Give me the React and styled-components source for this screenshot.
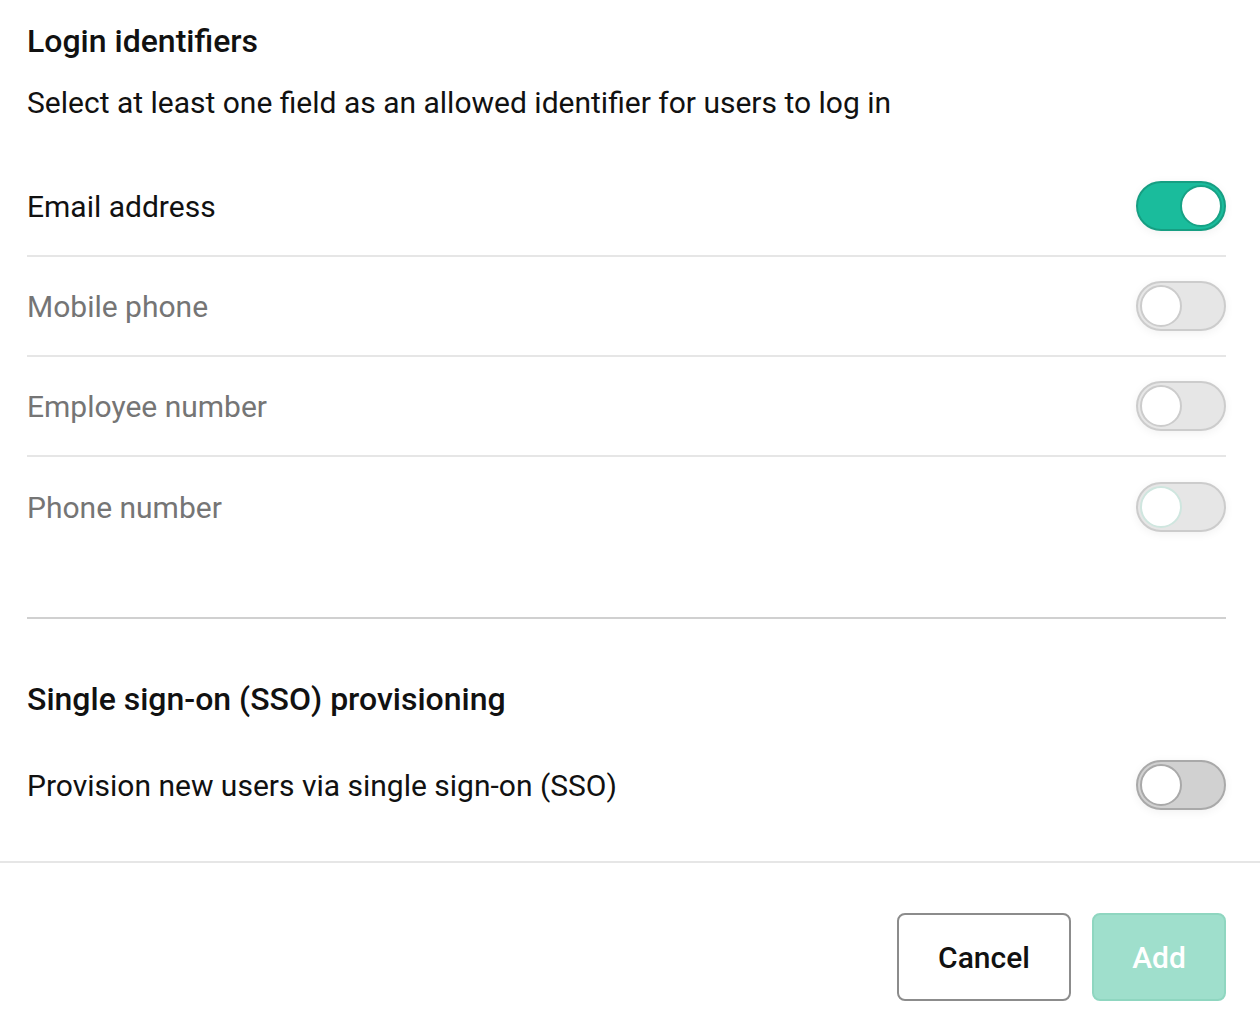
import React, { useState } from "react";
import styled, { createGlobalStyle } from "styled-components";

const GlobalStyle = createGlobalStyle`
  html, body {
    margin: 0;
    padding: 0;
    background: #ffffff;
    font-family: Roboto, "Noto Sans", Arial, sans-serif;
    color: #111111;
  }
  * { box-sizing: border-box; }
`;

const Dialog = styled.div`
  width: 1260px;
  height: 1026px;
  display: flex;
  flex-direction: column;
  background: #fff;
  overflow: hidden;
`;

const Body = styled.div`
  padding: 0 34px 0 27px;
`;

const Section = styled.section`
  display: flex;
  flex-direction: column;
  border-bottom: ${({ $divider }) => ($divider ? "2px solid #d0d0d0" : "none")};
  padding-bottom: ${({ $pad }) => $pad || 0}px;
`;

const Title = styled.h2`
  margin: 0;
  font-size: 32px;
  font-weight: 500;
  line-height: 36px;
  color: #111;
  padding-top: ${({ $top }) => $top}px;
`;

const Description = styled.p`
  margin: 27px 0 0;
  font-size: 30px;
  line-height: 34px;
  color: #111;
`;

const List = styled.div`
  display: flex;
  flex-direction: column;
  margin-top: ${({ $top }) => $top}px;
`;

const Row = styled.div`
  height: ${({ $h }) => $h || 100}px;
  display: flex;
  align-items: center;
  justify-content: space-between;
  border-bottom: ${({ $last }) => ($last ? "none" : "2px solid #e6e6e6")};
`;

const Label = styled.span`
  font-size: 30px;
  color: ${({ $muted }) => ($muted ? "#757575" : "#111")};
`;

const Track = styled.button`
  position: relative;
  width: 90px;
  height: 50px;
  border-radius: 25px;
  padding: 0;
  cursor: pointer;
  border: 2px solid
    ${({ $on, $dark }) => ($on ? "#169e82" : $dark ? "#a9a9a9" : "#cccccc")};
  background: ${({ $on, $dark }) => ($on ? "#1abc9c" : $dark ? "#d1d1d1" : "#e6e6e6")};
  box-shadow: 0 2px 10px rgba(0, 0, 0, 0.06);
`;

const Knob = styled.span`
  position: absolute;
  top: 2px;
  left: ${({ $on }) => ($on ? "42px" : "2px")};
  width: 42px;
  height: 42px;
  border-radius: 50%;
  background: #fff;
  border: 2px solid
    ${({ $on, $focus, $dark }) =>
      $on ? "#17a285" : $focus ? "#cfe6df" : $dark ? "#a9a9a9" : "#cccccc"};
`;

const Footer = styled.div`
  margin-top: auto;
  border-top: 2px solid #e6e6e6;
  padding: 50px 34px 25px 0;
  display: flex;
  justify-content: flex-end;
  gap: 21px;
`;

const Button = styled.button`
  height: 88px;
  min-width: ${({ $w }) => $w}px;
  border-radius: 8px;
  font-family: Roboto, "Noto Sans", Arial, sans-serif;
  font-size: 30px;
  font-weight: 500;
  cursor: pointer;
  border: 2px solid ${({ $primary }) => ($primary ? "#8fd6c0" : "#8c8c8c")};
  background: ${({ $primary }) => ($primary ? "#9fdfcc" : "#fff")};
  color: ${({ $primary }) => ($primary ? "#fff" : "#111")};
`;

const Toggle = ({ on, dark, focus, onClick }) => (
  <Track $on={on} $dark={dark} onClick={onClick} aria-pressed={on}>
    <Knob $on={on} $dark={dark} $focus={focus} />
  </Track>
);

const identifiers = [
  { id: "email", label: "Email address" },
  { id: "mobile", label: "Mobile phone" },
  { id: "employee", label: "Employee number" },
  { id: "phone", label: "Phone number" },
];

export default function App() {
  const [enabled, setEnabled] = useState({ email: true });
  const [sso, setSso] = useState(false);

  const flip = (id) => setEnabled((s) => ({ ...s, [id]: !s[id] }));

  return (
    <>
      <GlobalStyle />
      <Dialog>
        <Body>
          <Section $divider $pad={60}>
            <Title $top={23}>Login identifiers</Title>
            <Description>
              Select at least one field as an allowed identifier for users to log in
            </Description>
            <List $top={37}>
              {identifiers.map((item, i) => (
                <Row key={item.id} $last={i === identifiers.length - 1}>
                  <Label $muted={!enabled[item.id]}>{item.label}</Label>
                  <Toggle
                    on={!!enabled[item.id]}
                    focus={item.id === "phone"}
                    onClick={() => flip(item.id)}
                  />
                </Row>
              ))}
            </List>
          </Section>
          <Section>
            <Title $top={62}>Single sign-on (SSO) provisioning</Title>
            <List $top={18}>
              <Row $last $h={100}>
                <Label>Provision new users via single sign-on (SSO)</Label>
                <Toggle on={sso} dark onClick={() => setSso(!sso)} />
              </Row>
            </List>
          </Section>
        </Body>
        <Footer>
          <Button $w={174}>Cancel</Button>
          <Button $w={134} $primary>
            Add
          </Button>
        </Footer>
      </Dialog>
    </>
  );
}
